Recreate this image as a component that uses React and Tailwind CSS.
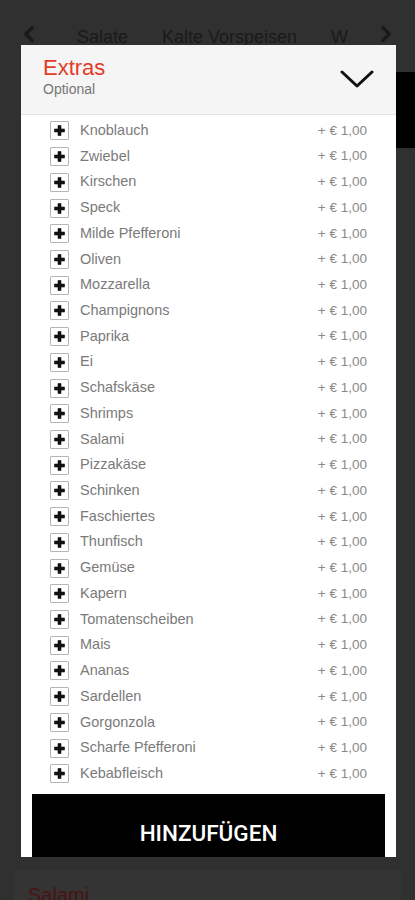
import { ChevronLeft, ChevronRight } from "lucide-react";

const extras = [
  "Knoblauch",
  "Zwiebel",
  "Kirschen",
  "Speck",
  "Milde Pfefferoni",
  "Oliven",
  "Mozzarella",
  "Champignons",
  "Paprika",
  "Ei",
  "Schafskäse",
  "Shrimps",
  "Salami",
  "Pizzakäse",
  "Schinken",
  "Faschiertes",
  "Thunfisch",
  "Gemüse",
  "Kapern",
  "Tomatenscheiben",
  "Mais",
  "Ananas",
  "Sardellen",
  "Gorgonzola",
  "Scharfe Pfefferoni",
  "Kebabfleisch",
];

function PlusBox() {
  return (
    <div className="w-[19px] h-[19px] shrink-0 border border-[#b5b5b5] bg-white rounded-[1px] flex items-center justify-center">
      <svg width="11" height="11" viewBox="0 0 11 11">
        <path d="M4 0.5h3v3.5h3.5v3H7v3.5H4V7H0.5V4H4z" fill="#111" strokeLinejoin="round" stroke="#111" strokeWidth="0.6" />
      </svg>
    </div>
  );
}

export default function App() {
  return (
    <div
      className="relative w-[415px] h-[900px] overflow-hidden bg-[#303030]"
      style={{ fontFamily: '"Liberation Sans", Arial, sans-serif' }}
    >
      {/* dimmed page behind the sheet */}
      <div className="h-[72px] pt-[22px] flex items-start justify-between px-[16px] text-[#1a1a1a]">
        <ChevronLeft size={26} strokeWidth={3} className="-mt-[1px]" />
        <div className="flex gap-[34px] text-[18px] mt-[2px] ml-[10px]">
          <span>Salate</span>
          <span>Kalte Vorspeisen</span>
          <span>W</span>
        </div>
        <ChevronRight size={26} strokeWidth={3} className="-mt-[1px]" />
      </div>
      <div className="flex justify-end">
        <div className="w-[80px] h-[76px] bg-black" />
      </div>
      <div className="h-[722px]" />
      <div className="mx-[14px] h-[80px] bg-[#343434] px-[14px] pt-[10px]">
        <span className="text-[20px] text-[#4a1212]">Salami</span>
      </div>

      {/* Extras sheet */}
      <div className="absolute left-[21px] top-[45px] w-[375px] h-[812px] bg-white overflow-hidden flex flex-col">
        <div className="h-[70px] shrink-0 bg-[#f5f5f5] border-b border-[#e2e2e2] flex items-start justify-between pl-[22px] pr-[22px] pt-[10px]">
          <div className="flex flex-col">
            <span className="text-[22px] leading-[26px] text-[#e33b26]">Extras</span>
            <span className="text-[14px] leading-[17px] text-[#777]">Optional</span>
          </div>
          <svg width="34" height="20" viewBox="0 0 34 20" className="mt-[14px]">
            <path d="M2 3l15 14L32 3" fill="none" stroke="#111" strokeWidth="3" strokeLinecap="round" strokeLinejoin="round" />
          </svg>
        </div>

        <div className="pt-[3px] pl-[29px] pr-[29px]">
          {extras.map((name) => (
            <div key={name} className="h-[25.72px] flex items-center">
              <PlusBox />
              <span className="ml-[11px] flex-1 text-[14.5px] text-[#7a7a7a]">{name}</span>
              <span className="text-[13.5px] text-[#8a8a8a]">+ € 1,00</span>
            </div>
          ))}
        </div>

        <div className="mt-[7px] mx-[11px] h-[80px] shrink-0 bg-black flex items-center justify-center">
          <span
            className="text-[22.5px] font-medium text-white"
            style={{ fontFamily: 'Roboto, "Liberation Sans", sans-serif' }}
          >
            HINZUFÜGEN
          </span>
        </div>
      </div>
    </div>
  );
}
